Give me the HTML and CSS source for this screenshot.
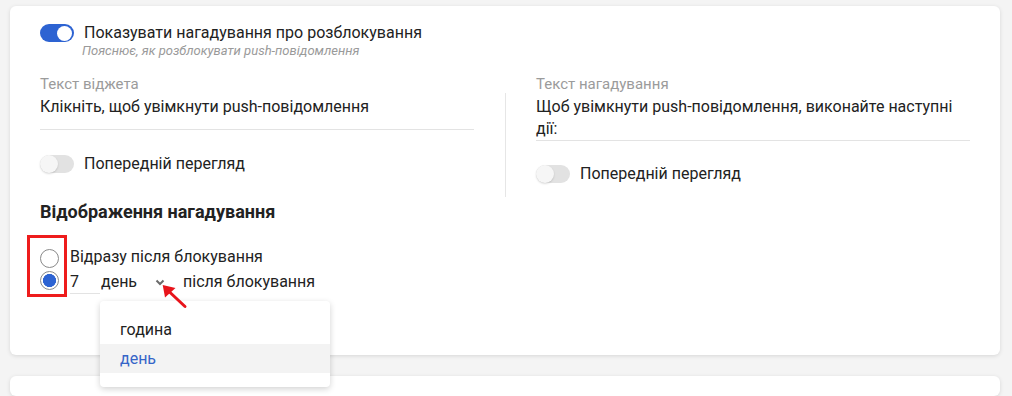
FILE: index.html
```html
<!DOCTYPE html>
<html>

<head>
  <meta charset="utf-8">
  <title>Нагадування про розблокування</title>
  <link rel="stylesheet" href="styles.css">
</head>

<body>
  <div class="card">
    <div class="switch_row">
      <span class="switch on"></span>
      <span class="switch_label">Показувати нагадування про розблокування</span>
    </div>
    <div class="hint">Пояснює, як розблокувати push-повідомлення</div>

    <div class="columns">
      <div class="col">
        <div class="field_label">Текст віджета</div>
        <div class="field_value">Клікніть, щоб увімкнути push-повідомлення</div>
        <div class="switch_row preview">
          <span class="switch"></span>
          <span class="switch_label">Попередній перегляд</span>
        </div>
      </div>
      <div class="col right">
        <div class="field_label">Текст нагадування</div>
        <div class="divided">
          <div class="field_value">Щоб увімкнути push-повідомлення, виконайте наступні дії:</div>
          <div class="switch_row preview">
            <span class="switch"></span>
            <span class="switch_label">Попередній перегляд</span>
          </div>
        </div>
      </div>
    </div>

    <h3 class="section_title">Відображення нагадування</h3>

    <div class="radios">
      <div class="radio_box">
        <span class="radio"></span>
        <span class="radio checked"></span>
      </div>
      <div class="radio_texts">
        <div class="radio_text">Відразу після блокування</div>
        <div class="radio_text delay">
          <span class="num_input">7</span>
          <span class="unit_select">день
            <svg class="chevron" width="10" height="7" viewBox="0 0 10 7">
              <path d="M1.5 1.5 L5 5 L8.5 1.5" fill="none" stroke="#6b6b6b" stroke-width="2" />
            </svg>
          </span>
          <span>після блокування</span>

          <div class="menu">
            <div class="menu_item">година</div>
            <div class="menu_item active">день</div>
          </div>

          <svg class="pointer" width="32" height="30" viewBox="0 0 32 30">
            <path d="M11 10.5 L27 25.5" stroke="#e8141b" stroke-width="3" stroke-linecap="round" />
            <path d="M4.7 4 L17.5 7 L7 16.5 Z" fill="#e8141b" />
          </svg>
        </div>
      </div>
    </div>
  </div>

  <div class="card next"></div>
</body>

</html>
```

FILE: styles.css
```css
body {
  margin: 0;
  padding: 6px 12px 0 10px;
  background-color: #f4f4f4;
  font-family: Roboto, "Noto Sans", sans-serif;
  color: #222;
  overflow: hidden;
}

.card {
  box-sizing: border-box;
  background: #fff;
  border-radius: 6px;
  box-shadow: 0 1px 4px rgba(0, 0, 0, 0.12);
  padding: 17px 30px 0 30px;
  height: 349px;
}

.card.next {
  margin-top: 21px;
  height: 20px;
}

.switch_row {
  display: flex;
  align-items: center;
  gap: 10px;
  line-height: 20px;
}

.switch {
  position: relative;
  width: 34px;
  height: 18px;
  border-radius: 9px;
  background: #e2e2e2;
  flex-shrink: 0;
}

.switch:after {
  content: "";
  position: absolute;
  top: 0;
  left: 0;
  width: 18px;
  height: 18px;
  border-radius: 50%;
  background: #f6f6f6;
  box-shadow: 0 1px 2px rgba(0, 0, 0, 0.15);
}

.switch.on {
  background: #2d63d2;
}

.switch.on:after {
  left: 17px;
  top: 1.5px;
  width: 15px;
  height: 15px;
  background: #fff;
  box-shadow: none;
}

.switch_label {
  font-size: 16px;
}

.hint {
  font-size: 13px;
  line-height: 16px;
  font-style: italic;
  color: #9a9a9a;
  margin-left: 42px;
}

.columns {
  display: grid;
  grid-template-columns: 434px 1fr;
  column-gap: 31px;
  margin-top: 16px;
}

.field_label {
  font-size: 15px;
  color: #9b9b9b;
  line-height: 18px;
}

.field_value {
  font-size: 16px;
  line-height: 22px;
  padding: 3px 0 11px;
  border-bottom: 1px solid #e3e3e3;
}

.preview {
  margin-top: 24px;
}

.right .field_label {
  padding-left: 31px;
}

.divided {
  border-left: 1px solid #e6e6e6;
  padding: 0 0 13px 30px;
}

.divided .field_value {
  padding: 3px 0 0;
}

.right .preview {
  margin-top: 23px;
}

.section_title {
  font-size: 18px;
  line-height: 22px;
  font-weight: 700;
  margin: 4px 0 12px;
}

.radios {
  display: flex;
  margin-left: -13px;
}

/* red frame round the two radios */
.radio_box {
  border: 3px solid #ee1c1c;
  width: 24px;
  height: 45px;
  padding: 11px 0 0 10px;
  display: flex;
  flex-direction: column;
  gap: 3px;
  margin-right: 3px;
}

.radio {
  width: 19px;
  height: 19px;
  border-radius: 50%;
  border: 1px solid #8a8a8a;
  box-sizing: border-box;
  background: #fff;
}

.radio.checked {
  background: radial-gradient(circle, #2d63d2 0 6.3px, #fff 6.8px);
}

.radio_texts {
  padding-top: 9px;
  font-size: 16px;
}

.radio_text {
  line-height: 25px;
}

.delay {
  position: relative;
  display: flex;
  align-items: center;
}

.num_input {
  width: 30px;
  height: 24px;
  border-bottom: 1px solid #e3e3e3;
}

.unit_select {
  display: flex;
  align-items: center;
  gap: 18px;
  margin-left: 1px;
  margin-right: 18px;
}

.chevron {
  margin-top: 1px;
}

.menu {
  position: absolute;
  top: 32px;
  left: 30px;
  width: 230px;
  padding: 14px 0;
  background: #fff;
  border-radius: 4px;
  box-shadow: 0 2px 6px rgba(0, 0, 0, 0.18);
  z-index: 2;
}

.menu_item {
  font-size: 16px;
  line-height: 29px;
  padding-left: 20px;
}

.menu_item.active {
  background: #f3f3f3;
  color: #3565c8;
}

.pointer {
  position: absolute;
  top: 12px;
  left: 88px;
  z-index: 3;
}
```
